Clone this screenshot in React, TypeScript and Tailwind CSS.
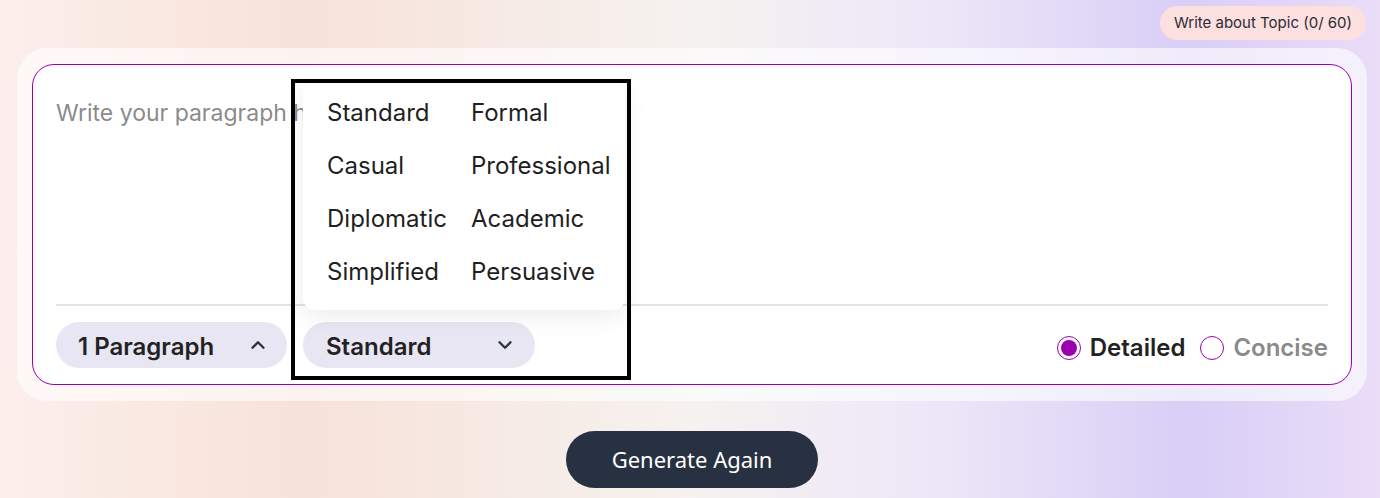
import React from "react";
import { ChevronUp, ChevronDown } from "lucide-react";

const items = [
  ["Standard", "Formal"],
  ["Casual", "Professional"],
  ["Diplomatic", "Academic"],
  ["Simplified", "Persuasive"],
];

export default function App() {
  return (
    <div
      className="relative min-h-[498px] w-full overflow-hidden bg-[linear-gradient(90deg,#fcefeb_0%,#f7e2d9_22%,#f6f2ef_50%,#ece7f8_68%,#d9cef6_86%,#e9ddf8_100%)]"
      style={{ fontFamily: "Inter, 'Noto Sans', sans-serif" }}
    >
      <div className="flex justify-end pt-[6px] pr-[14px]">
        <div className="flex h-[34px] items-center rounded-full bg-[#fcdfdf] px-[14px] pt-[1px] text-[15px] text-[#2b2b36]">
          Write about Topic (0/ 60)
        </div>
      </div>

      <div className="ml-[17px] mr-[13px] mt-[8px] rounded-[30px] bg-white/60 px-[15px] py-[16px]">
        <div className="flex h-[321px] flex-col rounded-[22px] border border-[#9a00ad] bg-white px-[23px] pb-[16px]">
          <div className="flex-1 pt-[31px] text-[23px] text-[#8b8b8b]">
            Write your paragraph here...
          </div>
          <div className="h-[2px] w-full bg-[#e2e2e2]" />
          <div className="mt-[16px] flex items-center">
            <button className="flex h-[46px] w-[231px] items-center justify-between rounded-full bg-[#e9e6f4] pl-[22px] pr-[18px] pt-[3px] text-[24px] font-semibold text-[#222]">
              <span>1 Paragraph</span>
              <ChevronUp size={22} strokeWidth={2.6} className="-mt-[3px] text-[#2b3342]" />
            </button>
            <div className="relative ml-[16px]">
              <div className="absolute bottom-[58px] left-0 z-10 w-[322px] rounded-[12px] bg-white pb-[12px] pl-[24px] pt-[4px] shadow-[0_6px_24px_rgba(0,0,0,0.08)]">
                {items.map((row) => (
                  <div key={row[0]} className="grid h-[53px] grid-cols-[144px_1fr] items-center text-[24px] text-[#1f1f1f]">
                    <span>{row[0]}</span>
                    <span>{row[1]}</span>
                  </div>
                ))}
              </div>
              <div className="pointer-events-none absolute left-[-12px] top-[-243px] z-20 h-[301px] w-[340px] border-[4px] border-black" />
              <button className="flex h-[46px] w-[232px] items-center justify-between rounded-full bg-[#e9e6f4] pl-[23px] pr-[19px] pt-[3px] text-[24px] font-semibold text-[#222]">
                <span>Standard</span>
                <ChevronDown size={22} strokeWidth={2.6} className="-mt-[3px] text-[#2b3342]" />
              </button>
            </div>
            <div className="ml-auto flex items-center pt-[5px]">
              <span className="flex h-[24px] w-[24px] items-center justify-center rounded-full border-[1.5px] border-[#9a00ad]">
                <span className="h-[16px] w-[16px] rounded-full bg-[#9a00ad]" />
              </span>
              <span className="ml-[9px] text-[24px] font-semibold text-[#222]">Detailed</span>
              <span className="ml-[15px] h-[24px] w-[24px] rounded-full border-[1.5px] border-[#9a00ad]" />
              <span className="ml-[9px] text-[24px] font-semibold text-[#8a8a8a]">Concise</span>
            </div>
          </div>
        </div>
      </div>

      <div className="mt-[30px] flex justify-center pl-[4px]">
        <button
          className="flex h-[57px] w-[252px] items-center justify-center rounded-full bg-[#283142] text-[22px] text-white"
          style={{ fontFamily: "'Noto Sans', sans-serif" }}
        >
          Generate Again
        </button>
      </div>
    </div>
  );
}
